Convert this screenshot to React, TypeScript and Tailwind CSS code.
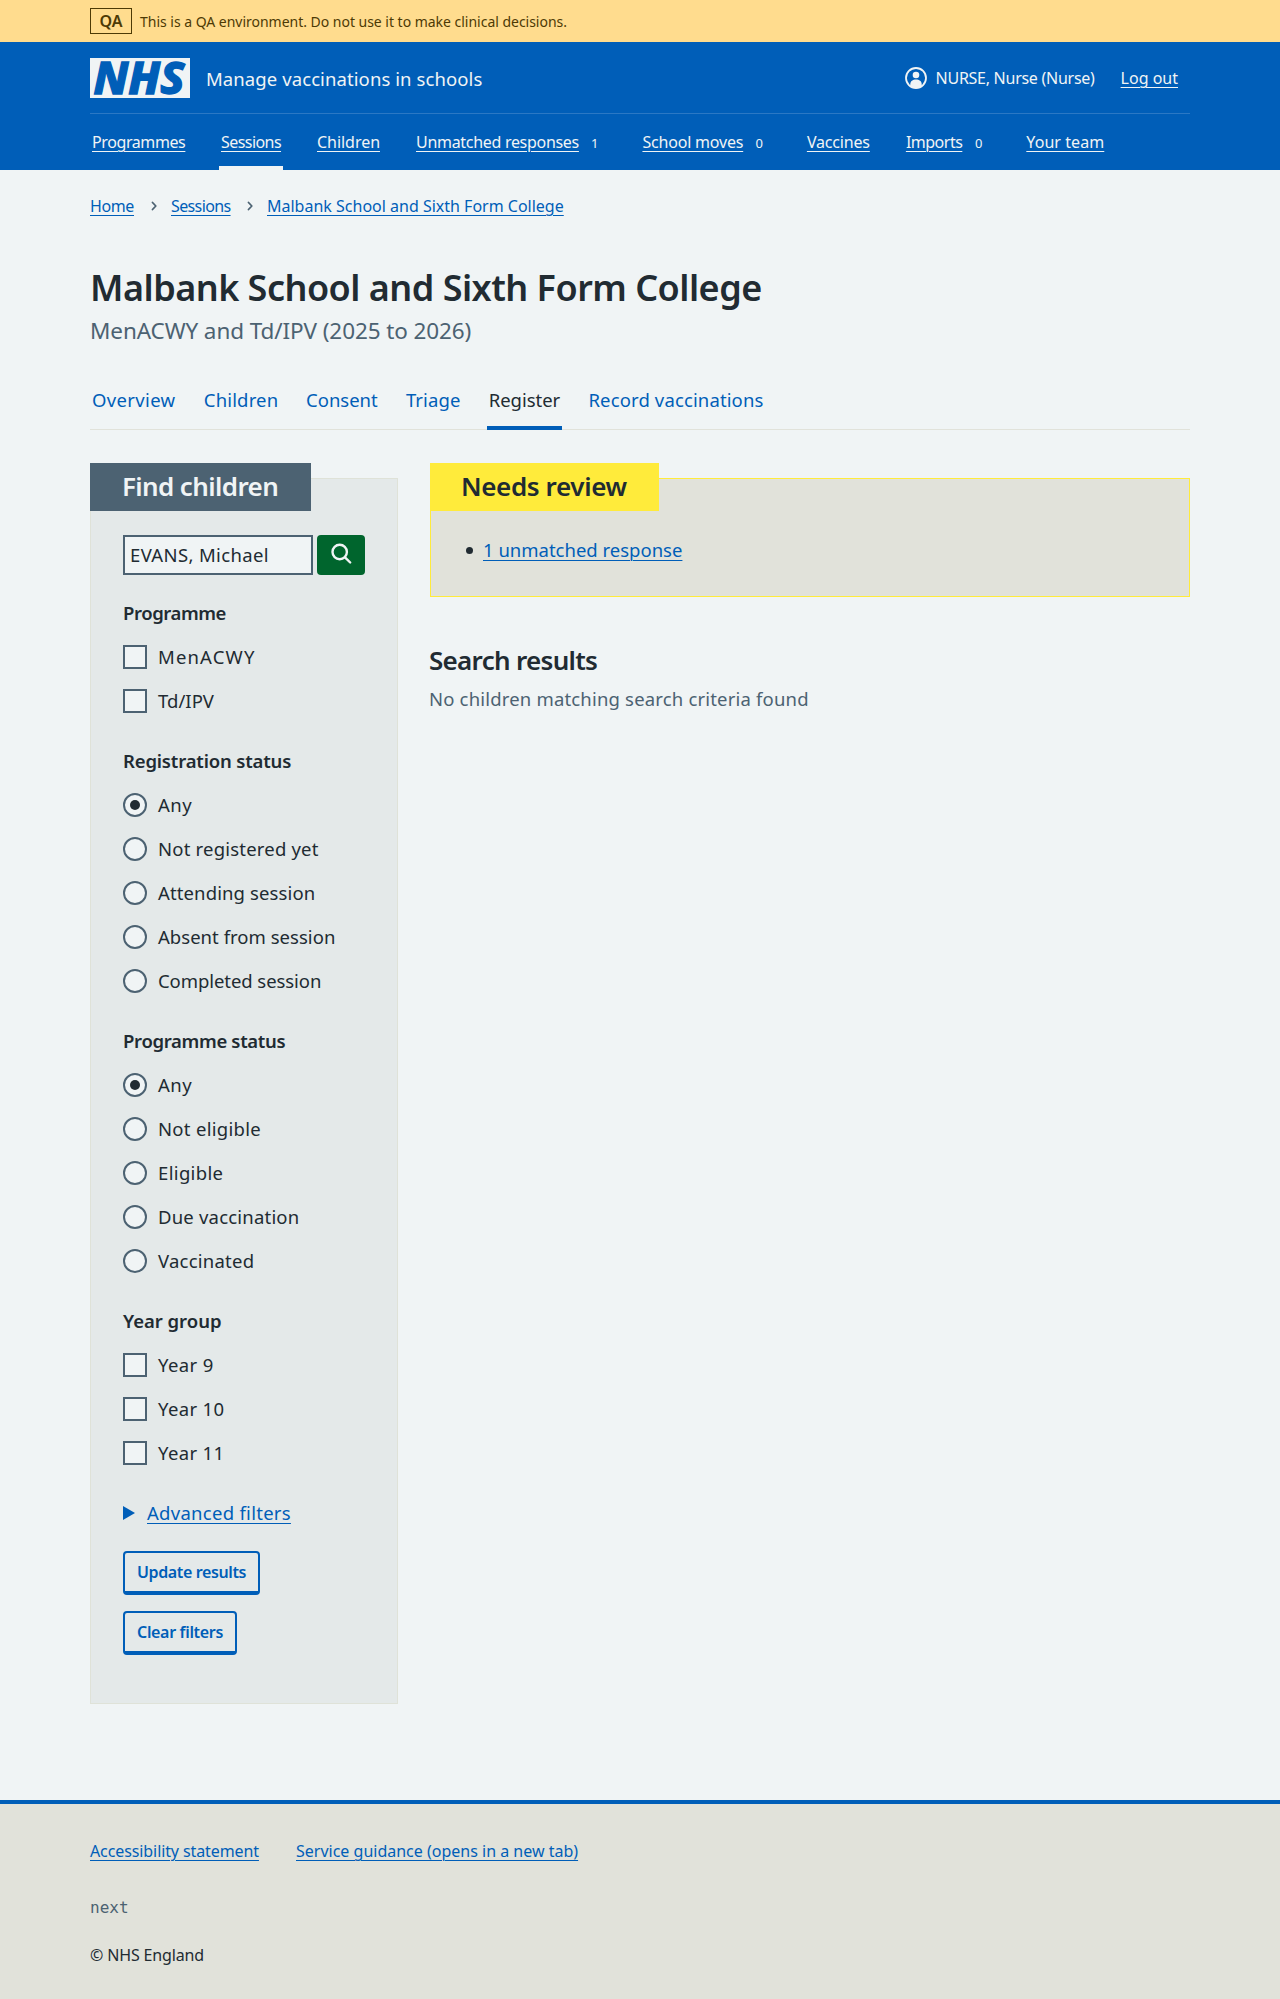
import type { ReactNode } from "react";

const link = "underline decoration-1 underline-offset-[3px]";

function NavItem({ label, width, tracking, current, count, gap }: { label: string; width: string; tracking: string; current?: boolean; count?: string; gap: string }) {
  return (
    <li className={`relative flex h-14 ${gap}`}>
      <a href="#" className={`block h-14 text-[16px] leading-[57px] whitespace-nowrap ${width} ${tracking} ${link}`}>{label}</a>
      {count && <span className="ml-3 text-[13px] leading-[59px]">{count}</span>}
      {current && <span className="absolute -left-0.5 -right-0.5 bottom-0 h-1 bg-[#f0f4f5]" />}
    </li>
  );
}

function Tab({ label, width, tracking, current }: { label: string; width: string; tracking: string; current?: boolean }) {
  return (
    <li className={`relative h-[56px] ${width}`}>
      <a href="#" className={`block pt-[10px] text-[18.5px] leading-[32px] whitespace-nowrap ${tracking} ${current ? "text-[#212b32]" : "text-[#005eb8]"}`}>{label}</a>
      {current && <span className="absolute -left-0.5 -right-0.5 bottom-0 h-1 bg-[#005eb8]" />}
    </li>
  );
}

type OptionItem = { label: string; tracking: string; checked?: boolean };

function Options({ title, titleTracking, kind, items }: { title: string; titleTracking: string; kind: "radio" | "checkbox"; items: OptionItem[] }) {
  return (
    <fieldset className="flex flex-col gap-5">
      <legend className={`contents text-[18.5px] leading-6 font-semibold ${titleTracking}`}>
        <span className="block h-6">{title}</span>
      </legend>
      {items.map((item) => (
        <label key={item.label} className="flex h-6 items-center">
          <span className={`flex size-6 shrink-0 items-center justify-center border-2 border-[#4c6272] bg-[#f0f4f5] ${kind === "radio" ? "rounded-full" : ""}`}>
            {item.checked && <span className="size-2.5 rounded-full bg-[#212b32]" />}
          </span>
          <span className={`ml-[11px] text-[18.5px] leading-6 whitespace-nowrap ${item.tracking}`}>{item.label}</span>
        </label>
      ))}
    </fieldset>
  );
}

function SecondaryButton({ children, className }: { children: ReactNode; className: string }) {
  return (
    <button className={`block h-11 rounded-[4px] border-2 border-b-4 border-[#005eb8] pt-px text-left text-[16px] leading-[37px] font-semibold whitespace-nowrap text-[#005eb8] ${className}`}>
      {children}
    </button>
  );
}

function Chevron() {
  return (
    <svg width="7" height="10" viewBox="0 0 7 10" fill="none" stroke="#4c6272" strokeWidth="1.8" strokeLinecap="round" strokeLinejoin="round">
      <path d="M1.5 1.5 4.8 5 1.5 8.5" />
    </svg>
  );
}

export default function App() {
  return (
    <div className="min-h-[1999px] bg-[#f0f4f5] font-['Noto_Sans',sans-serif] text-[#212b32]">
      <div className="h-[42px] bg-[#ffdc8e] text-[#4d3a05]">
        <div className="mx-auto flex w-[1100px] pt-2">
          <strong className="h-[26px] w-[42px] border border-[#4d3a05] text-center text-[16px] leading-[25px] font-semibold">QA</strong>
          <span className="ml-2 text-[14px] leading-[28px] tracking-[-0.02px]">This is a QA environment. Do not use it to make clinical decisions.</span>
        </div>
      </div>

      <header className="h-32 bg-[#005eb8] text-[#f0f4f5]">
        <div className="mx-auto w-[1100px]">
          <div className="flex h-[72px] border-b border-[#2b78c4] pt-4">
            <svg className="overflow-visible" width="100" height="40" viewBox="0 0 100 40" role="img" aria-label="NHS">
              <rect width="100" height="40" fill="#f0f4f5" />
              <text x="3.5" y="36" textLength="91" lengthAdjust="spacingAndGlyphs" fontFamily="Noto Sans, sans-serif" fontSize="44.5" fontWeight="800" fontStyle="italic" fill="#005eb8" stroke="#005eb8" strokeWidth="1.3">NHS</text>
            </svg>
            <span className="ml-4 text-[18.5px] leading-[41px] tracking-[0.09px]">Manage vaccinations in schools</span>
            <div className="ml-auto flex pr-3">
              <svg className="mt-[9px]" width="22" height="22" viewBox="0 0 22 22">
                <circle cx="11" cy="11" r="10" fill="none" stroke="#f0f4f5" strokeWidth="1.8" />
                <circle cx="11" cy="8" r="3.3" fill="#f0f4f5" />
                <path d="M5.3 18.8v-1.6c0-2.9 2.5-4.6 5.7-4.6s5.7 1.7 5.7 4.6v1.6C15 20.2 13 21 11 21s-4-.8-5.7-2.2Z" fill="#f0f4f5" />
              </svg>
              <span className="ml-[9px] w-[185px] text-[16px] leading-[41px] tracking-[-0.27px]">NURSE, Nurse (Nurse)</span>
              <a href="#" className={`text-[16px] leading-[41px] ${link}`}>Log out</a>
            </div>
          </div>
          <ul className="flex pl-0.5">
            <NavItem label="Programmes" width="w-[93px]" tracking="tracking-[-0.4px]" gap="mr-9" />
            <NavItem label="Sessions" width="w-[60px]" tracking="tracking-[-0.56px]" gap="mr-9" current />
            <NavItem label="Children" width="w-[63px]" tracking="tracking-[-0.04px]" gap="mr-9" />
            <NavItem label="Unmatched responses" width="w-[163px]" tracking="tracking-[-0.3px]" gap="mr-[44px]" count="1" />
            <NavItem label="School moves" width="w-[101px]" tracking="tracking-[-0.2px]" gap="mr-[44px]" count="0" />
            <NavItem label="Vaccines" width="w-[63px]" tracking="tracking-[-0.17px]" gap="mr-9" />
            <NavItem label="Imports" width="w-[57px]" tracking="tracking-[-0.5px]" gap="mr-[44px]" count="0" />
            <NavItem label="Your team" width="w-[78px]" tracking="tracking-[0.07px]" gap="" />
          </ul>
        </div>
      </header>

      <div className="mx-auto w-[1100px]">
        <nav className="flex h-12 items-end text-[16px] leading-6 text-[#005eb8]">
          <a href="#" className={`w-[44px] tracking-[-0.38px] ${link}`}>Home</a>
          <span className="flex h-6 w-[37px] items-center pl-[17px]"><Chevron /></span>
          <a href="#" className={`w-[59px] tracking-[-0.62px] ${link}`}>Sessions</a>
          <span className="flex h-6 w-[37px] items-center pl-[17px]"><Chevron /></span>
          <a href="#" className={link}>Malbank School and Sixth Form College</a>
        </nav>

        <h1 className="mt-[46px] text-[36px] leading-[48px] font-semibold tracking-[-0.52px]">Malbank School and Sixth Form College</h1>
        <p className="mt-[3px] text-[22.5px] leading-8 tracking-[-0.1px] text-[#4c6272]">MenACWY and Td/IPV (2025 to 2026)</p>

        <ul className="mt-[27px] flex h-[56px] gap-[28.3px] border-b border-[#e1e2da] pl-0.5">
          <Tab label="Overview" width="w-[83.5px]" tracking="tracking-[0.35px]" />
          <Tab label="Children" width="w-[74px]" tracking="tracking-[0.16px]" />
          <Tab label="Consent" width="w-[71.5px]" tracking="tracking-[-0.03px]" />
          <Tab label="Triage" width="w-[54.5px]" tracking="tracking-[0.1px]" />
          <Tab label="Register" width="w-[71.5px]" tracking="tracking-[-0.02px]" current />
          <Tab label="Record vaccinations" width="w-[175px]" tracking="tracking-[0.13px]" />
        </ul>

        <div className="flex items-start gap-8 pt-12">
          <section className="h-[1226px] w-[308px] border border-[#dfe2d8] bg-[#e4e9e9] pl-8">
            <h2 className="-mt-4 -ml-[33px] h-12 w-[221px] bg-[#4c6272] pl-[32px] text-[26px] leading-[46px] font-semibold tracking-[-0.62px] whitespace-nowrap text-[#f0f4f5]">Find children</h2>
            <div className="mt-6 flex gap-1">
              <input type="text" defaultValue="EVANS, Michael" className="h-10 w-[190px] border-2 border-[#4c6272] bg-[#f0f4f5] px-[5px] pb-px text-[18.5px] leading-[35px] tracking-[0.36px]" />
              <button className="flex h-10 w-12 items-start justify-center rounded-[4px] bg-[#00652d] pt-2">
                <svg width="22" height="22" viewBox="0 0 22 22" fill="none" stroke="#f0f4f5" strokeWidth="2.4" strokeLinecap="round">
                  <circle cx="9.7" cy="9" r="7.2" />
                  <path d="m15 14.3 5.2 5.2" />
                </svg>
              </button>
            </div>
            <div className="mt-[26px] flex flex-col gap-9">
              <Options title="Programme" titleTracking="tracking-[-0.43px]" kind="checkbox" items={[
                { label: "MenACWY", tracking: "tracking-[1.15px]" },
                { label: "Td/IPV", tracking: "tracking-[0.03px]" },
              ]} />
              <Options title="Registration status" titleTracking="tracking-[-0.17px]" kind="radio" items={[
                { label: "Any", tracking: "tracking-[0.55px]", checked: true },
                { label: "Not registered yet", tracking: "tracking-[0.2px]" },
                { label: "Attending session", tracking: "tracking-[0.12px]" },
                { label: "Absent from session", tracking: "tracking-[0.03px]" },
                { label: "Completed session", tracking: "tracking-[-0.07px]" },
              ]} />
              <Options title="Programme status" titleTracking="tracking-[-0.33px]" kind="radio" items={[
                { label: "Any", tracking: "tracking-[0.55px]", checked: true },
                { label: "Not eligible", tracking: "tracking-[0.3px]" },
                { label: "Eligible", tracking: "tracking-[0.35px]" },
                { label: "Due vaccination", tracking: "tracking-[0.2px]" },
                { label: "Vaccinated", tracking: "tracking-[0.23px]" },
              ]} />
              <Options title="Year group" titleTracking="tracking-[-0.03px]" kind="checkbox" items={[
                { label: "Year 9", tracking: "tracking-[0.4px]" },
                { label: "Year 10", tracking: "tracking-[0.35px]" },
                { label: "Year 11", tracking: "tracking-[0.35px]" },
              ]} />
              <div className="flex h-6 items-center text-[#005eb8]">
                <svg width="12" height="14" viewBox="0 0 12 14" fill="currentColor"><path d="M0 0v14l12-7Z" /></svg>
                <a href="#" className={`ml-3 text-[18.5px] leading-6 tracking-[0.28px] ${link}`}>Advanced filters</a>
              </div>
            </div>
            <div className="mt-[26px] flex flex-col gap-4">
              <SecondaryButton className="w-[137px] pl-3 tracking-[-0.38px]">Update results</SecondaryButton>
              <SecondaryButton className="w-[114px] pl-3 tracking-[-0.33px]">Clear filters</SecondaryButton>
            </div>
          </section>

          <main className="w-[760px]">
            <section className="h-[119px] border border-[#ffeb3b] bg-[#e1e2da]">
              <h2 className="-mt-4 -ml-px h-12 w-[229px] bg-[#ffeb3b] pl-[31px] text-[26px] leading-[46px] font-semibold tracking-[-0.38px] whitespace-nowrap">Needs review</h2>
              <ul className="mt-6 pl-[35px]">
                <li className="flex items-center">
                  <span className="size-[7px] rounded-full bg-[#212b32]" />
                  <a href="#" className={`ml-[10px] text-[18.5px] leading-[30px] text-[#005eb8] ${link}`}>1 unmatched response</a>
                </li>
              </ul>
            </section>
            <h2 className="mt-[45px] -ml-px text-[26px] leading-9 font-semibold tracking-[-0.7px]">Search results</h2>
            <p className="mt-[6px] -ml-px text-[18.5px] leading-[30px] tracking-[0.18px] text-[#4c6272]">No children matching search criteria found</p>
          </main>
        </div>
      </div>

      <footer className="mt-24 h-[199px] border-t-4 border-[#005eb8] bg-[#e1e2da]">
        <div className="mx-auto w-[1100px] pt-[35px]">
          <div className="flex text-[16px] leading-6 text-[#005eb8]">
            <a href="#" className={`w-[169px] tracking-[-0.1px] whitespace-nowrap ${link}`}>Accessibility statement</a>
            <a href="#" className={`ml-[37px] ${link}`}>Service guidance (opens in a new tab)</a>
          </div>
          <p className="mt-[33px] font-['DejaVu_Sans_Mono',monospace] text-[16px] leading-6 text-[#4c6272]">next</p>
          <p className="mt-[23px] text-[16px] leading-6 tracking-[-0.15px]">© NHS England</p>
        </div>
      </footer>
    </div>
  );
}
